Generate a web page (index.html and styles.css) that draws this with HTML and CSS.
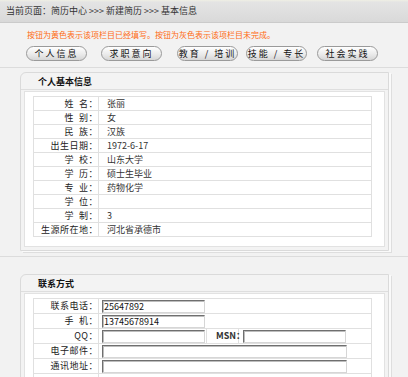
FILE: index.html
```html
<!DOCTYPE html>
<html lang="zh-CN">
<head>
    <meta charset="UTF-8">
    <title>基本信息</title>
    <link rel="stylesheet" href="styles.css">
</head>
<body>

    <!-- 当前位置 -->
    <div class="crumb">当前页面：简历中心 &gt;&gt;&gt; 新建简历 &gt;&gt;&gt; 基本信息</div>

    <!-- 提示与栏目按钮 -->
    <div class="toolbar">
        <div class="tips">按钮为黄色表示该项栏目已经填写。按钮为灰色表示该项栏目未完成。</div>
        <div class="tabs">
            <a class="tab" href="#">个人信息</a>
            <a class="tab" href="#">求职意向</a>
            <a class="tab" href="#">教育 / 培训</a>
            <a class="tab" href="#">技能 / 专长</a>
            <a class="tab" href="#">社会实践</a>
        </div>
    </div>

    <!-- 个人基本信息 -->
    <div class="section section-first">
        <div class="panel">
            <div class="panel-title">个人基本信息</div>
            <div class="panel-body">
                <table class="info">
                    <tr><td class="label">姓&ensp;名：</td><td class="value">张丽</td></tr>
                    <tr><td class="label">性&ensp;别：</td><td class="value">女</td></tr>
                    <tr><td class="label">民&ensp;族：</td><td class="value">汉族</td></tr>
                    <tr><td class="label">出生日期：</td><td class="value">1972-6-17</td></tr>
                    <tr><td class="label">学&ensp;校：</td><td class="value">山东大学</td></tr>
                    <tr><td class="label">学&ensp;历：</td><td class="value">硕士生毕业</td></tr>
                    <tr><td class="label">专&ensp;业：</td><td class="value">药物化学</td></tr>
                    <tr><td class="label">学&ensp;位：</td><td class="value"></td></tr>
                    <tr><td class="label">学&ensp;制：</td><td class="value">3</td></tr>
                    <tr><td class="label">生源所在地：</td><td class="value">河北省承德市</td></tr>
                </table>
            </div>
        </div>
    </div>

    <!-- 联系方式 -->
    <div class="section section-second">
        <div class="panel">
            <div class="panel-title">联系方式</div>
            <div class="panel-body">
                <table class="info contact">
                    <tr><td class="label">联系电话：</td><td class="field"><input class="short" type="text" value="25647892"></td></tr>
                    <tr><td class="label">手&ensp;机：</td><td class="field"><input class="short" type="text" value="13745678914"></td></tr>
                    <tr>
                        <td class="label">QQ：</td>
                        <td class="field">
                            <div class="pair">
                                <input class="short" type="text">
                                <span class="pair-label">MSN：</span>
                                <input class="short" type="text">
                            </div>
                        </td>
                    </tr>
                    <tr><td class="label">电子邮件：</td><td class="field"><input class="long" type="text"></td></tr>
                    <tr><td class="label">通讯地址：</td><td class="field"><input class="long" type="text"></td></tr>
                    <tr><td class="label"></td><td class="field"></td></tr>
                </table>
            </div>
        </div>
    </div>

</body>
</html>
```

FILE: styles.css
```css
/* Reset */
* {
    margin: 0;
    padding: 0;
    box-sizing: border-box;
}

body {
    font-family: "Noto Sans CJK SC", "Liberation Sans", sans-serif;
    font-size: 9px;
    color: #333;
    background-color: #f2f2f2;
    overflow: hidden;
}

/* 当前位置 */
.crumb {
    height: 23px;
    line-height: 22px;
    padding-left: 6px;
    color: #333;
    background: linear-gradient(#efefe4 0, #e4e4e4 2px, #d9d9d9 100%);
    border-bottom: 1px solid #cbcbcb;
}

/* 提示与按钮 */
.toolbar {
    padding-bottom: 6px;
    border-bottom: 1px solid #dcdcdc;
}

.tips {
    padding: 6px 0 0 27px;
    line-height: 12px;
    font-size: 8px;
    color: #ff6a13;
}

.tabs {
    display: flex;
    margin-top: 5px;
    padding-left: 26px;
}

.tab {
    width: 61px;
    height: 15px;
    line-height: 13px;
    text-align: center;
    color: #111;
    text-decoration: none;
    letter-spacing: 2px;
    border: 1px solid #9a9a9a;
    border-radius: 8px;
    background: linear-gradient(#ffffff, #e9e9e9 60%, #d6d6d6);
}

.tab:nth-child(2) { margin-left: 14px; }
.tab:nth-child(3) { margin-left: 15px; }
.tab:nth-child(4) { margin-left: 8px; }
.tab:nth-child(5) { margin-left: 10px; }

/* 栏目 */
.section {
    padding-left: 20px;
}

.section-first {
    padding-top: 4px;
    padding-bottom: 5px;
    border-bottom: 1px solid #dcdcdc;
}

.section-second {
    padding-top: 17px;
}

.panel {
    width: 369px;
    padding: 0 3px 3px 3px;
    background: #f3f3f3;
    border: 1px solid #dadada;
    border-radius: 6px 0 0 0;
    box-shadow: 2px 1px 0 #fafafa, 3px 2px 0 #dedede;
}

.panel-title {
    height: 17px;
    line-height: 17px;
    padding-left: 17px;
    font-weight: bold;
    color: #111;
    border-bottom: 1px solid #dedede;
    margin: 0 -3px 1px -3px;
}

.panel-body {
    background: #fff;
    border: 1px solid #e2e2e2;
    padding: 4px 12px 9px 8px;
}

/* 信息表格 */
.info {
    width: 100%;
    border-collapse: collapse;
    border: 1px solid #d8d8d8;
}

.info td {
    height: 14px;
    line-height: 12px;
    border: 1px solid #e0e0e0;
    padding: 0;
}

.info .label {
    width: 65px;
    text-align: right;
    letter-spacing: 0.5px;
    color: #222;
}

.info .value {
    padding-left: 8px;
    color: #333;
}

.contact td {
    height: 15px;
}

.contact .field {
    padding-left: 3px;
}

.pair {
    display: flex;
    align-items: center;
}

.pair-label {
    width: 33px;
    height: 15px;
    line-height: 14px;
    margin: -1px 4px -1px 1px;
    padding-left: 9px;
    font-weight: bold;
    color: #333;
    border-left: 1px solid #e0e0e0;
    border-right: 1px solid #e0e0e0;
}

input {
    display: block;
    height: 13px;
    padding: 0 1px;
    font-family: "Noto Sans CJK SC", "Liberation Sans", sans-serif;
    font-size: 9px;
    color: #111;
    background: #fff;
    border: 1px solid;
    border-color: #6f6f6f #d6d6d6 #d6d6d6 #6f6f6f;
    box-shadow: inset 1px 1px 0 #bdbdbd;
}

input.short {
    width: 103px;
}

input.long {
    width: 245px;
}
```
